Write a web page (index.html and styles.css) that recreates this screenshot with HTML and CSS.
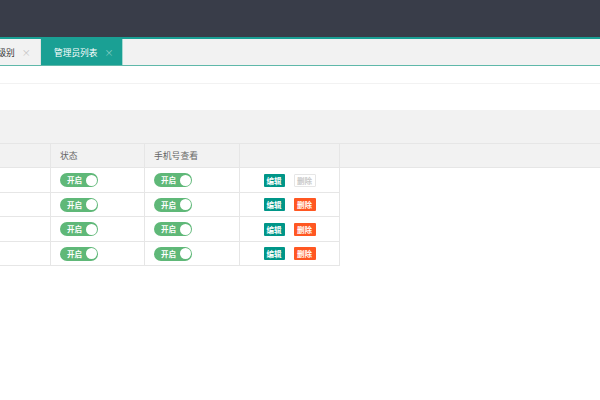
FILE: index.html
```html
<!DOCTYPE html>
<html lang="zh-CN">
<head>
<meta charset="utf-8">
<title>管理员列表</title>
<link rel="stylesheet" href="styles.css">
</head>
<body>
<div class="header"></div>
<div class="tabbar">
  <div class="tab tab-first"><span>会员级别</span><span class="close">×</span></div>
  <div class="tab active"><span>管理员列表</span><span class="close">×</span></div>
</div>
<div class="blank-a"></div>
<div class="blank-b"></div>
<div class="grey-bar"></div>
<div class="grid">
  <div class="row head">
    <div class="cell c1"></div>
    <div class="cell c2">状态</div>
    <div class="cell c3">手机号查看</div>
    <div class="cell c4"></div>
  </div>
  <div class="row">
    <div class="cell c1"></div>
    <div class="cell c2"><span class="switch"><span class="sw-text">开启</span><i class="knob"></i></span></div>
    <div class="cell c3"><span class="switch"><span class="sw-text">开启</span><i class="knob"></i></span></div>
    <div class="cell c4 ops"><span class="btn edit">编辑</span><span class="btn del disabled">删除</span></div>
  </div>
  <div class="row">
    <div class="cell c1"></div>
    <div class="cell c2"><span class="switch"><span class="sw-text">开启</span><i class="knob"></i></span></div>
    <div class="cell c3"><span class="switch"><span class="sw-text">开启</span><i class="knob"></i></span></div>
    <div class="cell c4 ops"><span class="btn edit">编辑</span><span class="btn del">删除</span></div>
  </div>
  <div class="row">
    <div class="cell c1"></div>
    <div class="cell c2"><span class="switch"><span class="sw-text">开启</span><i class="knob"></i></span></div>
    <div class="cell c3"><span class="switch"><span class="sw-text">开启</span><i class="knob"></i></span></div>
    <div class="cell c4 ops"><span class="btn edit">编辑</span><span class="btn del">删除</span></div>
  </div>
  <div class="row">
    <div class="cell c1"></div>
    <div class="cell c2"><span class="switch"><span class="sw-text">开启</span><i class="knob"></i></span></div>
    <div class="cell c3"><span class="switch"><span class="sw-text">开启</span><i class="knob"></i></span></div>
    <div class="cell c4 ops"><span class="btn edit">编辑</span><span class="btn del">删除</span></div>
  </div>
</div>
</body>
</html>
```
FILE: styles.css
```css
* { box-sizing: border-box; }
html, body { margin: 0; padding: 0; background: #fff; overflow: hidden; }
body {
  width: 600px;
  height: 400px;
  font-family: "Noto Sans CJK SC", "Noto Sans", sans-serif;
  color: #333;
}
.header { height: 37px; background: #393d49; }
.tabbar {
  display: flex;
  height: 29px;
  background: #f2f2f2;
  border-top: 2px solid #1aa094;
  border-bottom: 1px solid #5fb8a9;
  overflow: hidden;
}
.tab {
  display: flex;
  align-items: center;
  gap: 7px;
  padding: 0 0 0 13px;
  height: 26px;
  font-size: 8.7px;
  color: #333;
  border-right: 1px solid #e2e2e2;
  white-space: nowrap;
  flex: none;
}
.tab-first { margin-left: -33px; width: 74px; }
.tab .close { color: #c2c2c2; font-size: 9px; }
.tab.active { background: #1aa094; color: #fff; width: 82px; border-right-color: #a6d9d1; }
.tab.active .close { color: #8fd0c6; }
.blank-a { height: 18px; border-bottom: 1px solid #f2f2f2; }
.blank-b { height: 26px; }
.grey-bar { height: 33px; background: #f2f2f2; }
.grid { display: flex; flex-direction: column; }
.row {
  display: grid;
  grid-template-columns: 51px 94px 95px 100px;
  width: 340px;
  height: 24.5px;
  border-bottom: 1px solid #e6e6e6;
}
.row.head {
  width: 600px;
  grid-template-columns: 51px 94px 95px 100px 1fr;
  height: 25px;
  background: #f2f2f2;
  border-top: 1px solid #e6e6e6;
  border-bottom: 1px solid #e6e6e6;
}
.cell {
  display: flex;
  align-items: center;
  border-right: 1px solid #e6e6e6;
  padding-left: 9px;
  font-size: 8.8px;
  color: #666;
  white-space: nowrap;
}
.switch {
  position: relative;
  display: flex;
  align-items: center;
  width: 38px;
  height: 14px;
  border-radius: 7px;
  background: #5fb878;
  padding-left: 7px;
  margin-top: 1px;
}
.sw-text { color: #fff; font-size: 7.5px; line-height: 14px; font-weight: 700; }
.knob {
  position: absolute;
  right: 1.5px;
  top: 1.5px;
  width: 11px;
  height: 11px;
  border-radius: 50%;
  background: #fff;
}
.ops { justify-content: center; gap: 9px; padding-left: 0; }
.btn {
  display: inline-flex;
  align-items: center;
  justify-content: center;
  height: 13px;
  padding: 0;
  font-size: 7.5px;
  font-weight: 700;
  color: #fff;
  border-radius: 1px;
  border: 1px solid transparent;
  margin-top: 1px;
  white-space: nowrap;
}
.edit { background: #009688; width: 21px; }
.del { background: #ff5722; width: 22px; }
.del.disabled { background: #fff; border-color: #e6e6e6; color: #c9c9c9; }
```
